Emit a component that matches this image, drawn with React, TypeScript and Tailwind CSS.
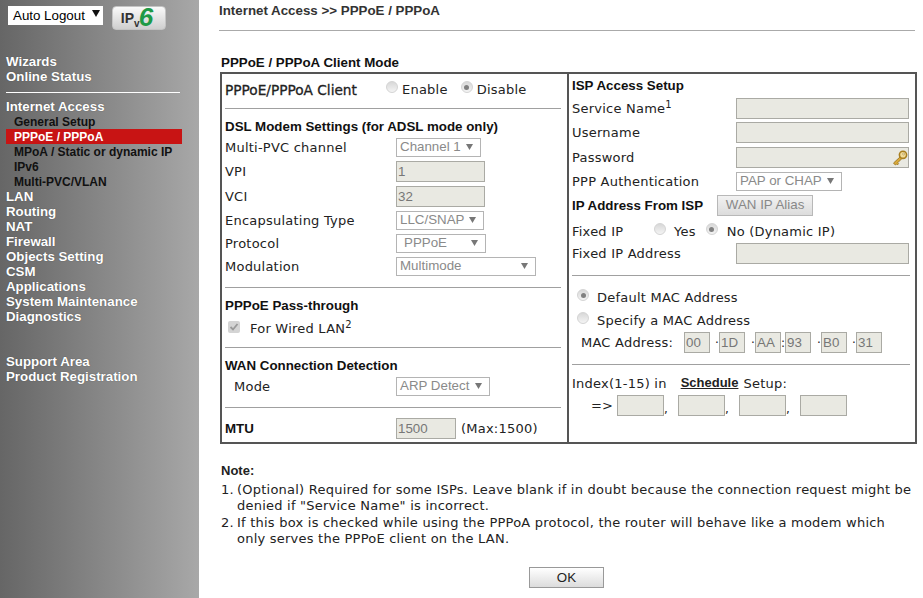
import type { ReactNode } from "react";

const sans = "font-['Liberation_Sans',Arial,sans-serif]";
const label = "font-['DejaVu_Sans',Verdana,sans-serif] text-[13px] tracking-[0.23px]";

const menuTop = ["Wizards", "Online Status"];
const menuSub = ["General Setup", "PPPoE / PPPoA", "MPoA / Static or dynamic IP", "IPv6", "Multi-PVC/VLAN"];
const menuRest = ["LAN", "Routing", "NAT", "Firewall", "Objects Setting", "CSM", "Applications", "System Maintenance", "Diagnostics"];

function TopLink({ text }: { text: string }) {
  return <div className="h-[15px] pl-1.5 text-[13.3px] leading-[15px] font-bold text-white [text-shadow:0_0_1px_#444]">{text}</div>;
}

function Sidebar() {
  return (
    <aside className={`${sans} h-[598px] w-[199px] shrink-0 bg-gradient-to-r from-[#666666] to-[#a8a8a8]`}>
      <div className="flex items-start gap-[9px] pt-1.5 pl-2">
        <div className="flex h-[19px] w-[95px] items-center justify-between bg-white pr-[3px] pl-[5px] text-[13.33px] text-black">
          Auto Logout
          <svg width="8" height="7" viewBox="0 0 8 7" className="mb-1"><path d="M0 0h8L4 7z" fill="#111" /></svg>
        </div>
        <div className="flex h-6 w-[54px] items-center justify-center rounded-[4px] border border-[#c4c4c4] bg-gradient-to-b from-[#fafafa] to-[#cfcfcf] pr-1 text-[#333]">
          <span className="text-[14px] leading-none font-bold">IP</span>
          <span className="mt-[12px] text-[10px] leading-none font-bold">v</span>
          <span className="-mt-0.5 -ml-[1px] text-[26px] leading-none font-bold text-[#1e9a46] italic">6</span>
        </div>
      </div>
      <nav className="mt-6">
        {menuTop.map((m) => <TopLink key={m} text={m} />)}
        <div className="mt-2 ml-1.5 h-px w-[174px] bg-white" />
        <div className="mt-1.5"><TopLink text="Internet Access" /></div>
        {menuSub.map((m) => (
          <div
            key={m}
            className={
              m === "PPPoE / PPPoA"
                ? "ml-1.5 h-[15px] w-[176px] bg-[#c81414] pl-2 text-[12px] leading-[17px] font-bold text-white"
                : "h-[15px] pl-3.5 text-[12px] leading-[17px] font-bold text-[#111]"
            }
          >
            {m}
          </div>
        ))}
        {menuRest.map((m) => <TopLink key={m} text={m} />)}
        <div className="mt-[30px]"><TopLink text="Support Area" /></div>
        <TopLink text="Product Registration" />
      </nav>
    </aside>
  );
}

function Radio({ on, className = "" }: { on?: boolean; className?: string }) {
  return (
    <span className={`-mt-1.5 inline-flex size-3 shrink-0 items-center justify-center rounded-full border border-[#d4d4d4] bg-gradient-to-b from-[#d8d8d8] to-[#f4f4f4] ${className}`}>
      {on && <span className="size-[5px] rounded-full bg-[#808080]" />}
    </span>
  );
}

function Select({ text, className, pad = "pl-[3px]" }: { text: string; className: string; pad?: string }) {
  return (
    <div className={`${sans} ${className} ${pad} -mt-0.5 flex items-center justify-between border border-[#b4b4b4] bg-white pr-[7px] text-[13.33px] tracking-normal text-[#8a8a8a]`}>
      {text}
      <svg width="7" height="6" viewBox="0 0 7 6"><path d="M0 0h7L3.5 6z" fill="#777" /></svg>
    </div>
  );
}

function Field({ value = "", className }: { value?: string; className: string }) {
  return (
    <input
      readOnly
      value={value}
      className={`${sans} ${className} -mt-0.5 border border-[#aaaaa4] bg-[#e9e9e2] px-[1px] text-[13.33px] tracking-normal text-[#777] outline-none`}
    />
  );
}

function Row({ children, className = "" }: { children: ReactNode; className?: string }) {
  return <div className={`flex h-5 items-center pt-0.5 whitespace-nowrap ${className}`}>{children}</div>;
}

function Heading({ children }: { children: ReactNode }) {
  return <span className={`${sans} text-[13.33px] font-bold tracking-normal text-[#111]`}>{children}</span>;
}

function Rule({ className }: { className: string }) {
  return <div className={`h-px bg-[#a0a0a0] ${className}`} />;
}

function KeyIcon() {
  return (
    <svg width="16" height="18" viewBox="0 0 16 18" className="absolute top-0 right-px">
      <path d="M8.2 7.8 1.5 14l1.8 2 1.2-1 .9.9 1.2-1.2-.9-.9 3.9-3.9" fill="#d9a93a" stroke="#94701c" strokeWidth="0.8" />
      <circle cx="11" cy="5.8" r="3.6" fill="#f1dc9a" stroke="#a87f20" strokeWidth="1.6" />
      <circle cx="11.6" cy="5" r="1" fill="#e9e9e2" stroke="#a87f20" strokeWidth="0.5" />
    </svg>
  );
}

function LeftColumn() {
  return (
    <div className="w-[347px] shrink-0 border-r-2 border-[#555] pr-1.5 pl-[3px]">
      <Row className="mt-[5px]">
        <span className="w-[161px] text-[13.7px] tracking-normal [-webkit-text-stroke:0.3px_#222]">PPPoE/PPPoA Client</span>
        <Radio /><span className="ml-1">Enable</span>
        <Radio on className="ml-[13px]" /><span className="ml-1">Disable</span>
      </Row>
      <Rule className="mt-[9px]" />
      <Row className="mt-[7px]"><Heading>DSL Modem Settings (for ADSL mode only)</Heading></Row>
      <Row className="mt-px"><span className="w-[171px]">Multi-PVC channel</span><Select text="Channel 1" className="h-[19px] w-[85px]" /></Row>
      <Row className="mt-1"><span className="w-[171px]">VPI</span><Field value="1" className="h-[21px] w-[89px]" /></Row>
      <Row className="mt-[5px]"><span className="w-[171px]">VCI</span><Field value="32" className="h-[21px] w-[89px]" /></Row>
      <Row className="mt-1"><span className="w-[171px]">Encapsulating Type</span><Select text="LLC/SNAP" className="h-[19px] w-[88px]" /></Row>
      <Row className="mt-[3px]"><span className="w-[171px]">Protocol</span><Select text="PPPoE" pad="pl-[7px]" className="h-[19px] w-[90px]" /></Row>
      <Row className="mt-[3px]"><span className="w-[171px]">Modulation</span><Select text="Multimode" className="h-[19px] w-[140px]" /></Row>
      <Rule className="mt-[11px]" />
      <Row className="mt-[7px]"><Heading>PPPoE Pass-through</Heading></Row>
      <Row className="mt-[3px] pl-[3px]">
        <span className="-mt-1 flex size-[12px] items-center justify-center rounded-[2px] bg-[#d4d4d4]">
          <svg width="10" height="10" viewBox="0 0 10 10"><path d="M1.5 5 4 7.5 8.5 2" fill="none" stroke="#999" strokeWidth="1.8" /></svg>
        </span>
        <span className="ml-2.5">For Wired LAN<sup className="text-[10px]">2</sup></span>
      </Row>
      <Rule className="mt-[9px]" />
      <Row className="mt-[7px]"><Heading>WAN Connection Detection</Heading></Row>
      <Row className="mt-px"><span className="w-[171px] pl-[9px]">Mode</span><Select text="ARP Detect" className="h-[19px] w-[94px]" /></Row>
      <Rule className="mt-[11px]" />
      <Row className="mt-[10px]">
        <span className="flex w-[171px]"><Heading>MTU</Heading></span>
        <Field value="1500" className="h-[21px] w-[60px]" />
        <span className="ml-[5px]">(Max:1500)</span>
      </Row>
    </div>
  );
}

const macParts = [
  { sep: "·", value: "1D", gap: "w-[9px]" },
  { sep: "·", value: "AA", gap: "w-[10px]" },
  { sep: ":", value: "93", gap: "w-[4px]" },
  { sep: "·", value: "B0", gap: "w-[10px]" },
  { sep: "·", value: "31", gap: "w-[9px]" },
];

function RightColumn() {
  return (
    <div className="flex-1 pr-[5px] pl-[3px]">
      <Row className="mt-px"><Heading>ISP Access Setup</Heading></Row>
      <Row className="mt-[3px]"><span className="w-[164px]">Service Name<sup className="text-[10px]">1</sup></span><Field className="h-[21px] w-[173px]" /></Row>
      <Row className="mt-1"><span className="w-[164px]">Username</span><Field className="h-[21px] w-[173px]" /></Row>
      <Row className="mt-[5px]">
        <span className="w-[164px]">Password</span>
        <div className="relative flex"><Field className="h-[21px] w-[173px]" /><KeyIcon /></div>
      </Row>
      <Row className="mt-1"><span className="w-[164px]">PPP Authentication</span><Select text="PAP or CHAP" className="h-[19px] w-[106px]" /></Row>
      <Row className="mt-1">
        <Heading>IP Address From ISP</Heading>
        <div className={`${sans} -mt-0.5 ml-[14px] flex h-[21px] w-[96px] items-center justify-center border border-[#b8b8b8] bg-gradient-to-b from-[#f2f2f2] to-[#dcdcdc] text-[13.33px] tracking-normal text-[#888]`}>WAN IP Alias</div>
      </Row>
      <Row className="mt-1.5">
        <span className="w-[82px]">Fixed IP</span>
        <Radio /><span className="ml-2">Yes</span>
        <Radio on className="ml-2.5" /><span className="ml-[9px]">No (Dynamic IP)</span>
      </Row>
      <Row className="mt-0.5"><span className="w-[164px]">Fixed IP Address</span><Field className="h-[21px] w-[173px]" /></Row>
      <Rule className="mt-3" />
      <Row className="mt-[11px] pl-[5px]"><Radio on /><span className="ml-2">Default MAC Address</span></Row>
      <Row className="mt-[3px] pl-[5px]"><Radio /><span className="ml-2">Specify a MAC Address</span></Row>
      <Row className="mt-0.5 pl-[9px]">
        <span className="w-[103px]">MAC Address:</span>
        <Field value="00" className="h-[21px] w-[26px]" />
        {macParts.map((p) => (
          <span key={p.value} className="flex items-center">
            <span className={`${p.gap} text-right text-[12px] leading-none`}>{p.sep}</span>
            <Field value={p.value} className="h-[21px] w-[26px]" />
          </span>
        ))}
      </Row>
      <Rule className="mt-3" />
      <Row className="mt-2">
        <span>Index(1-15) in</span>
        <span className={`${sans} -mt-0.5 ml-3.5 text-[13px] font-bold tracking-normal underline`}>Schedule</span>
        <span className="ml-[5px]">Setup:</span>
      </Row>
      <Row className="mt-0.5 pl-[19px]">
        <span className="w-[26px]">=&gt;</span>
        {[0, 1, 2, 3].map((i) => (
          <span key={i} className="flex items-end">
            <Field className="h-[21px] w-[47px]" />
            {i < 3 && <span className="w-[14px] text-[12px] leading-[14px]">,</span>}
          </span>
        ))}
      </Row>
    </div>
  );
}

export default function App() {
  return (
    <div className="flex h-[598px] w-[923px] overflow-hidden bg-white text-[#222]">
      <Sidebar />
      <main className={`${label} w-[724px] pl-5`}>
        <div className={`${sans} h-[31px] w-[696px] border-b border-[#aaa] pt-px text-[13.33px] font-bold tracking-normal text-[#333]`}>
          Internet Access &gt;&gt; PPPoE / PPPoA
        </div>
        <div className={`${sans} mt-[22px] ml-0.5 h-[19px] text-[13.33px] leading-[20px] font-bold tracking-normal text-[#111]`}>PPPoE / PPPoA Client Mode</div>
        <div className="ml-px flex h-[372px] w-[697px] border-2 border-[#555]">
          <LeftColumn />
          <RightColumn />
        </div>
        <div className={`${sans} mt-[19px] ml-0.5 text-[13px] leading-4 font-bold tracking-normal`}>Note:</div>
        <ol className="mt-[2.5px] ml-0.5 w-[696px] text-[13px] leading-[16.5px]">
          <li className="flex"><span className="w-4 shrink-0">1.</span><span>(Optional) Required for some ISPs. Leave blank if in doubt because the connection request might be denied if "Service Name" is incorrect.</span></li>
          <li className="flex"><span className="w-4 shrink-0">2.</span><span>If this box is checked while using the PPPoA protocol, the router will behave like a modem which only serves the PPPoE client on the LAN.</span></li>
        </ol>
        <div className="mt-[19px] ml-[310px]">
          <button className={`${sans} h-[21px] w-[75px] border border-[#999] bg-gradient-to-b from-white to-[#dcdcdc] text-[13.33px] tracking-normal text-[#222]`}>OK</button>
        </div>
      </main>
    </div>
  );
}
